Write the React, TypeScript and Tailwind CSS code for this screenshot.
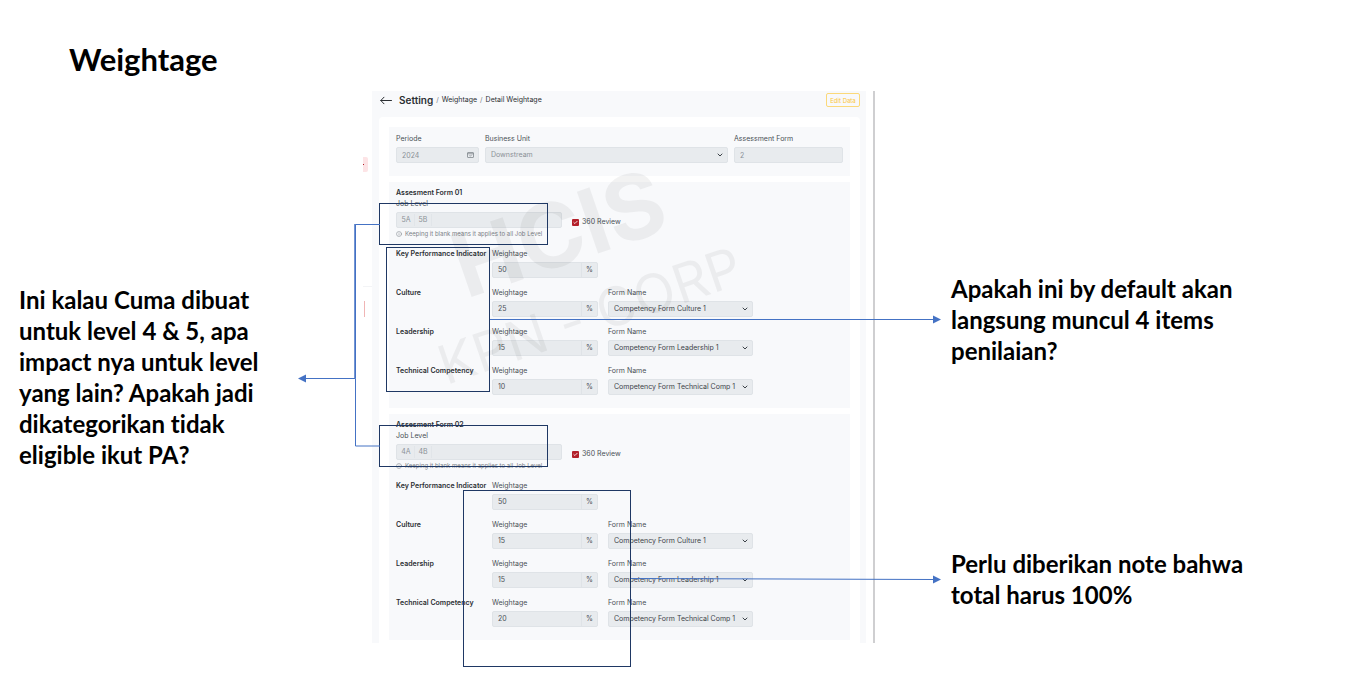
import React from "react";
import { Check, ChevronDown, Info } from "lucide-react";

type Item = { name: string; weight: number; form?: string };
type FormData = { id: string; levels: string[]; items: Item[] };

const forms: FormData[] = [
  {
    id: "01",
    levels: ["5A", "5B"],
    items: [
      { name: "Key Performance Indicator", weight: 50 },
      { name: "Culture", weight: 25, form: "Competency Form Culture 1" },
      { name: "Leadership", weight: 15, form: "Competency Form Leadership 1" },
      { name: "Technical Competency", weight: 10, form: "Competency Form Technical Comp 1" },
    ],
  },
  {
    id: "02",
    levels: ["4A", "4B"],
    items: [
      { name: "Key Performance Indicator", weight: 50 },
      { name: "Culture", weight: 15, form: "Competency Form Culture 1" },
      { name: "Leadership", weight: 15, form: "Competency Form Leadership 1" },
      { name: "Technical Competency", weight: 20, form: "Competency Form Technical Comp 1" },
    ],
  },
];

const field =
  "block h-4 w-full appearance-none rounded-xs border border-[#dfe3e7] bg-[#e8ebee] px-[5px] text-[7px] leading-3";

function Select({ id, value, tone }: { id: string; value: string; tone: string }) {
  return (
    <div className="relative">
      <select id={id} className={`${field} ${tone}`} defaultValue={value}>
        <option>{value}</option>
      </select>
      <ChevronDown className="pointer-events-none absolute top-1 right-1 size-2 text-[#3c4248]" strokeWidth={3} />
    </div>
  );
}

function AssessmentForm({ data }: { data: FormData }) {
  return (
    <section className="bg-[#f8f9fb] px-[7px] pt-[5px] pb-[13px]">
      <h2 className="text-[7px] leading-[11px] font-semibold text-[#2b2f33]">Assesment Form {data.id}</h2>
      <div className="flex items-end gap-[10px]">
        <div className="flex w-[166px] flex-col">
          <label htmlFor={`level-${data.id}`} className="leading-3">
            Job Level
          </label>
          <div className="mt-[2px] flex h-4 items-center rounded-xs border border-[#dfe3e7] bg-[#e8ebee] pl-px text-[#8b9197]">
            {data.levels.map((level) => (
              <span
                key={level}
                className="flex h-3 w-[17px] items-center justify-center border-r border-[#e1e5e9]"
              >
                {level}
              </span>
            ))}
            <input id={`level-${data.id}`} className="h-3 min-w-0 flex-1" />
          </div>
          <p className="flex items-center gap-[3px] text-[6px] leading-3 whitespace-nowrap text-[#7b8187]">
            <Info className="size-[6px]" strokeWidth={2} />
            Keeping it blank means it applies to all Job Level
          </p>
        </div>
        <label className="mb-3 flex items-center gap-[3px] leading-3">
          <span className="relative flex size-[7px]">
            <input
              type="checkbox"
              defaultChecked
              className="size-[7px] appearance-none rounded-[1px] bg-[#b3202a]"
            />
            <Check className="pointer-events-none absolute top-px left-px size-[5px] text-white" strokeWidth={4} />
          </span>
          360 Review
        </label>
      </div>
      <div className="mt-2 flex flex-col gap-[9px]">
        {data.items.map((item, i) => (
          <div key={item.name} className="grid grid-cols-[86px_106px_145px] gap-[10px]">
            <h3 className="leading-3 font-semibold whitespace-nowrap text-[#2b2f33]">{item.name}</h3>
            <div>
              <label htmlFor={`w-${data.id}-${i}`} className="block leading-3">
                Weightage
              </label>
              <div className="mt-[2px] flex h-4 rounded-xs border border-[#dfe3e7] bg-[#e8ebee]">
                <input
                  id={`w-${data.id}-${i}`}
                  className="w-full min-w-0 flex-1 px-[5px]"
                  defaultValue={item.weight}
                />
                <span className="flex w-4 items-center justify-center border-l border-[#dfe3e7]">%</span>
              </div>
            </div>
            {item.form && (
              <div>
                <label htmlFor={`f-${data.id}-${i}`} className="mb-[2px] block leading-3">
                  Form Name
                </label>
                <Select id={`f-${data.id}-${i}`} value={item.form} tone="text-[#3c4248]" />
              </div>
            )}
          </div>
        ))}
      </div>
    </section>
  );
}

function Watermark() {
  return (
    <div aria-hidden="true" className="pointer-events-none text-black/5">
      <span className="absolute top-[114px] left-[104px] origin-[6px_93px] -rotate-[19deg] text-[90px] leading-[120px] font-bold">
        HCIS
      </span>
      <span className="absolute top-[242px] left-[84px] origin-[4px_51px] -rotate-[19deg] text-[54px] leading-[64px] whitespace-nowrap">
        KPN - CORP
      </span>
    </div>
  );
}

function Connectors() {
  return (
    <svg
      aria-hidden="true"
      className="pointer-events-none absolute top-0 -left-[72px] h-[600px] w-[660px]"
      viewBox="290 91 660 600"
      fill="none"
      stroke="#4472c4"
    >
      <path d="M380 224.500H355.500V378.500M380 446H355.500V378.500H306M490 319.500H933M631 578.500L933 579.500" />
      <path d="M355 224V378" strokeWidth="1.500" />
      <path d="M298 378.500l8-4v8zM941 319.500l-8-4v8zM941 579.500l-8-4v8z" fill="#4472c4" stroke="none" />
    </svg>
  );
}

function Screen() {
  return (
    <div className="relative pl-[10px] font-[Inter,'Liberation_Sans',sans-serif] text-[7px] text-[#4a5056]">
      <div className="flex border-r-2 border-[#cfcfd1] pr-[7px]">
        <div className="flex-1 bg-[#f8f9fb] pr-[6px] pl-[7px]">
          <header className="flex h-[26px] items-start justify-between pt-[2px]">
            <nav className="flex h-[14px] items-center text-[#2b2f33]">
              <button aria-label="Back" className="pl-px">
                <svg
                  className="h-[9px] w-3"
                  viewBox="0 0 12 9"
                  fill="none"
                  stroke="currentColor"
                  strokeLinecap="round"
                  strokeLinejoin="round"
                >
                  <path d="M11.500 4.500H.8M4 1.200L.8 4.500 4 7.800" />
                </svg>
              </button>
              <h1 className="ml-[7px] text-[10px] font-semibold">Setting</h1>
              <span className="mx-[3px] text-[#7b8187]">/</span>
              <a href="#weightage">Weightage</a>
              <span className="mx-[3px] text-[#7b8187]">/</span>
              <span>Detail Weightage</span>
            </nav>
            <button className="h-[14px] w-[34px] rounded-xs border border-[#fbd97a] text-[6px] whitespace-nowrap text-[#fbc63a]">
              Edit Data
            </button>
          </header>
          <main className="flex flex-col gap-[6px] rounded-t-sm bg-white px-[10px] pt-[10px] pb-[3px]">
            <section className="grid grid-cols-[83px_1fr_109px] gap-[6px] bg-[#f8f9fb] px-[7px] pt-[6px] pb-[13px]">
              <div>
                <label htmlFor="period" className="block leading-3">
                  Periode
                </label>
                <div className="relative mt-[2px]">
                  <input id="period" className={`${field} text-[#8b9197]`} defaultValue="2024" />
                  <svg
                    className="absolute top-[5px] right-[5px] h-[6px] w-[7px] text-[#7b8187]"
                    viewBox="0 0 14 12"
                    fill="none"
                    stroke="currentColor"
                    strokeWidth="1.500"
                  >
                    <rect x="1" y="1" width="12" height="10" rx="1" />
                    <path d="M1 3.500h12M5 7l1.500 1.500L9.500 5.500" />
                  </svg>
                </div>
              </div>
              <div>
                <label htmlFor="unit" className="mb-[2px] block leading-3">
                  Business Unit
                </label>
                <Select id="unit" value="Downstream" tone="text-[#8b9197]" />
              </div>
              <div>
                <label htmlFor="count" className="block leading-3">
                  Assessment Form
                </label>
                <input id="count" className={`${field} mt-[2px] text-[#8b9197]`} defaultValue="2" />
              </div>
            </section>
            {forms.map((f) => (
              <AssessmentForm key={f.id} data={f} />
            ))}
          </main>
        </div>
      </div>
      <Watermark />
      <div className="absolute top-[66px] left-px h-[15px] w-[5px] rounded-r-xs bg-[#fde4e6]" />
      <div className="absolute top-[73px] left-px h-px w-px bg-[#b3202a]" />
      <div className="absolute top-[210px] left-px h-4 w-[2px] border-r border-[#f0b5b5]" />
      <div className="absolute top-[195px] left-px h-px w-[9px] bg-[#f3f4f6]" />
      <div className="absolute top-[112px] left-[17px] h-[42px] w-[169px] border border-[#1f3864]" />
      <div className="absolute top-[156px] left-6 h-[145px] w-[104px] border border-[#1f3864]" />
      <div className="absolute top-[334px] left-[17px] h-[42px] w-[169px] border border-[#1f3864]" />
      <div className="absolute top-[399px] left-[101px] h-[177px] w-[168px] border border-[#1f3864]" />
      <Connectors />
    </div>
  );
}

export default function App() {
  return (
    <div className="min-h-screen bg-white font-[Lato,'Liberation_Sans',sans-serif] font-bold text-black [font-variant-ligatures:none]">
      <p className="h-[91px] pt-[39px] pl-[69px] text-[31px] leading-10">Weightage</p>
      <div className="grid grid-cols-[362px_513px_1fr]">
        <aside className="pt-[193px] pl-[19px] text-[24px] leading-[31px]">
          <p>
            Ini kalau Cuma dibuat
            <br />
            untuk level 4 &amp; 5, apa
            <br />
            impact nya untuk level
            <br />
            yang lain? Apakah jadi
            <br />
            dikategorikan tidak
            <br />
            eligible ikut PA?
          </p>
        </aside>
        <div className="font-normal">
          <Screen />
        </div>
        <aside className="flex flex-col gap-[182px] pt-[182px] pl-[76px] text-[24px] leading-[31px]">
          <p>
            Apakah ini by default akan
            <br />
            langsung muncul 4 items
            <br />
            penilaian?
          </p>
          <p>
            Perlu diberikan note bahwa
            <br />
            total harus 100%
          </p>
        </aside>
      </div>
    </div>
  );
}
